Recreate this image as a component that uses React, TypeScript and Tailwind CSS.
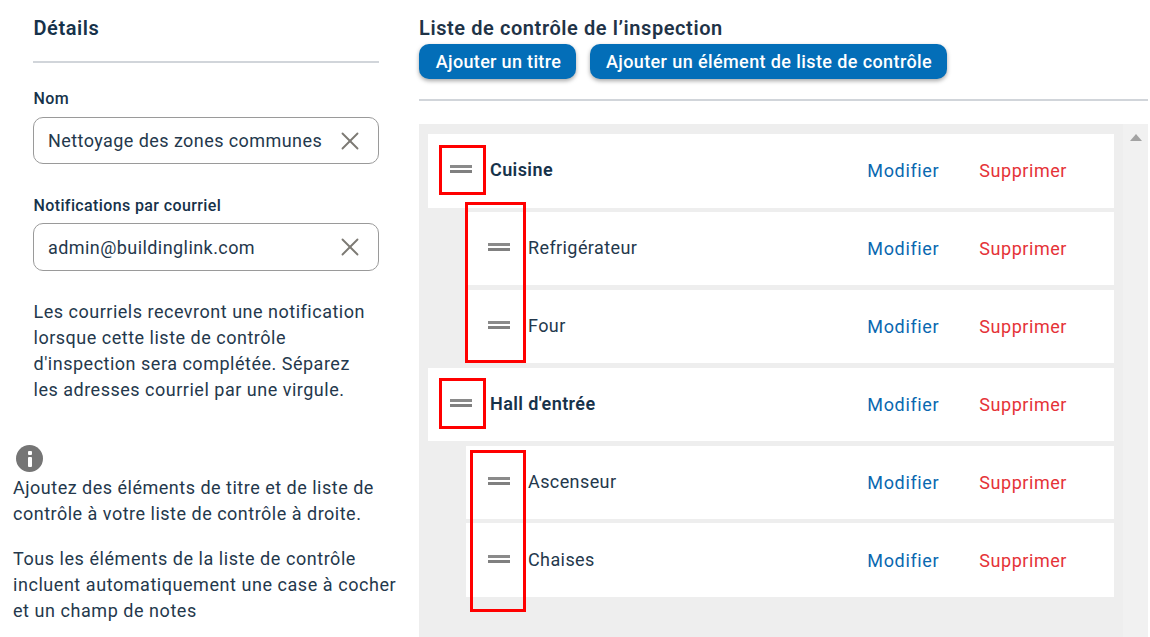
import { X } from "lucide-react";

const font = { fontFamily: '"Roboto", "Liberation Sans", sans-serif' };

function Handle() {
  return (
    <div className="flex flex-col gap-[2px] w-[22px] shrink-0 -mt-[3px]">
      <div className="h-[3px] bg-[#8a8a8a]" />
      <div className="h-[3px] bg-[#808080]" />
    </div>
  );
}

function Row({ label, title }: { label: string; title?: boolean }) {
  return (
    <div className={`h-[73.5px] bg-white flex items-center ${title ? "pl-[22px]" : "ml-[38px] pl-[22px]"}`}>
      <Handle />
      <span
        className={`ml-[18px] text-[18px] -mt-[2px] tracking-[0.4px] ${
          title ? "font-semibold text-[#16324a]" : "text-[#24384c]"
        }`}
      >
        {label}
      </span>
      <a className="ml-auto text-[18px] tracking-[0.65px] text-[#0a68b0]">Modifier</a>
      <a className="ml-[40px] mr-[47px] text-[18px] tracking-[0.55px] text-[#e53238]">Supprimer</a>
    </div>
  );
}

function Field({ label, value, tall }: { label: string; value: string; tall?: boolean }) {
  return (
    <div>
      <label className="block pl-[0.5px] text-[16px] leading-[20px] font-medium tracking-[0.38px] text-[#16324a]">
        {label}
      </label>
      <div
        className={`border border-[#9a9a9a] rounded-[10px] flex items-center pl-[14px] pr-[13px] ${
          tall ? "mt-[7px] h-[48px]" : "mt-[8px] h-[47px]"
        }`}
      >
        <span className="flex-1 text-[18px] tracking-[0.43px] text-[#24384c]">{value}</span>
        <X className="w-[30px] h-[30px] text-[#7d7a74]" strokeWidth={1.5} />
      </div>
    </div>
  );
}

export default function App() {
  return (
    <div className="relative w-[1150px] h-[637px] overflow-hidden bg-white flex" style={font}>
      {/* colonne gauche */}
      <div className="w-[419px] shrink-0 pl-[13px] pt-[16px]">
        <div className="ml-[20px] w-[346px]">
          <h2 className="pl-[0.5px] text-[20px] leading-[24px] font-semibold tracking-[0.55px] text-[#16324a]">
            Détails
          </h2>
          <hr className="mt-[21px] border-0 h-[2px] bg-[#d1d5da]" />
          <div className="mt-[26px]">
            <Field label="Nom" value="Nettoyage des zones communes" />
          </div>
          <div className="mt-[32px]">
            <Field label="Notifications par courriel" value="admin@buildinglink.com" tall />
          </div>
          <p className="mt-[28px] pl-[0.5px] text-[18px] leading-[26px] tracking-[0.51px] text-[#24384c]">
            Les courriels recevront une notification
            <br />
            lorsque cette liste de contrôle
            <br />
            d'inspection sera complétée. Séparez
            <br />
            les adresses courriel par une virgule.
          </p>
        </div>
        <div className="mt-[42px]">
          <div className="ml-[3px] w-[27px] h-[27px] rounded-full bg-[#757575] flex flex-col items-center justify-center gap-[2px]">
            <div className="w-[4px] h-[4px] bg-white rounded-[1px]" />
            <div className="w-[4px] h-[10px] bg-white rounded-[1px]" />
          </div>
          <p className="mt-[3px] text-[18px] leading-[26px] tracking-[0.5px] text-[#24384c]">
            Ajoutez des éléments de titre et de liste de
            <br />
            contrôle à votre liste de contrôle à droite.
          </p>
          <p className="mt-[19px] text-[18px] leading-[26px] tracking-[0.55px] text-[#24384c]">
            Tous les éléments de la liste de contrôle
            <br />
            incluent automatiquement une case à cocher
            <br />
            et un champ de notes
          </p>
        </div>
      </div>

      {/* colonne droite */}
      <div className="w-[729px] pt-[16px]">
        <h2 className="text-[20px] leading-[24px] font-semibold tracking-[0.58px] text-[#1f3347]">
          Liste de contrôle de l’inspection
        </h2>
        <div className="mt-[4px] flex gap-[14px]">
          <button className="h-[35px] w-[157px] pl-[2px] rounded-[10px] bg-[#036eb8] text-white text-[18px] font-medium tracking-[0.33px] shadow-[0_2px_4px_rgba(0,0,0,0.35)]">
            Ajouter un titre
          </button>
          <button className="h-[35px] w-[357px] pl-[1px] rounded-[10px] bg-[#036eb8] text-white text-[18px] font-medium tracking-[0.4px] shadow-[0_2px_4px_rgba(0,0,0,0.35)]">
            Ajouter un élément de liste de contrôle
          </button>
        </div>
        <hr className="mt-[20px] border-0 h-[2px] bg-[#d1d5da]" />
        <div className="mt-[23px] h-[513px] bg-[#eeeeee] flex">
          <div className="w-[695px] pl-[9px] pt-[10px] flex flex-col gap-[4.4px]">
            <Row label="Cuisine" title />
            <Row label="Refrigérateur" />
            <Row label="Four" />
            <Row label="Hall d'entrée" title />
            <Row label="Ascenseur" />
            <Row label="Chaises" />
          </div>
          <div className="ml-[9px] flex-1 bg-[#f1f1f1] flex justify-center pt-[10px]">
            <div className="w-0 h-0 border-l-[6px] border-r-[6px] border-b-[7px] border-l-transparent border-r-transparent border-b-[#a3a3a3]" />
          </div>
        </div>
      </div>

      {/* annotations rouges */}
      <div className="absolute left-[439px] top-[145px] w-[47px] h-[50px] border-[3px] border-[#ff0000]" />
      <div className="absolute left-[465px] top-[202px] w-[61px] h-[161px] border-[3px] border-[#ff0000]" />
      <div className="absolute left-[439px] top-[378px] w-[47px] h-[51px] border-[3px] border-[#ff0000]" />
      <div className="absolute left-[470px] top-[450px] w-[56px] h-[162px] border-[3px] border-[#ff0000]" />
    </div>
  );
}
